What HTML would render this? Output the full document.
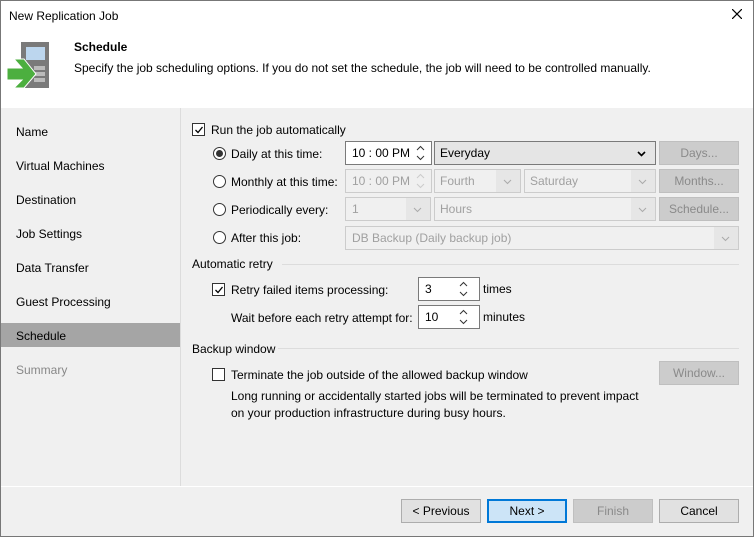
<!DOCTYPE html><html><head><style>
*{box-sizing:border-box;margin:0;padding:0}
body{width:754px;height:537px;overflow:hidden;font-family:"Liberation Sans",sans-serif;font-size:12px;color:#000;background:#f0f0f0;position:relative}
.a{position:absolute;white-space:nowrap}
.win{position:absolute;left:0;top:0;width:754px;height:537px;border:1px solid #777}
.box{position:absolute;border:1px solid #adadad;background:#fff;padding-left:6px;line-height:22px}
.dis{background:#f0f0f0;border-color:#ccc;color:#a0a0a0}
.btn{position:absolute;border:1px solid #adadad;background:#e1e1e1;text-align:center;line-height:22px}
.bd{background:#ccc;border-color:#bfbfbf;color:#8a8a8a}
.cb{position:absolute;width:13px;height:13px;border:1px solid #333;background:#fff}
.rb{position:absolute;width:13px;height:13px;border:1px solid #333;border-radius:50%;background:#fff}
.nav{position:absolute;left:16px}
svg.c{position:absolute}
</style></head><body>
<div class="a" style="left:0;top:0;width:754px;height:108px;background:#fff"></div>
<div class="a" style="left:9px;top:9px;font-size:12px">New Replication Job</div>
<svg class="a" style="left:732px;top:9px" width="10" height="10"><path d="M0 0L10 10M10 0L0 10" stroke="#000" stroke-width="1.2"/></svg>
<svg class="a" style="left:6px;top:42px" width="46" height="48">
<rect x="15" y="0" width="28" height="46" fill="#7a7a7a"/>
<rect x="20" y="5" width="19" height="13" fill="#bcd6ee"/>
<rect x="28" y="24" width="11" height="4" fill="#bbb"/><rect x="28" y="30" width="11" height="4" fill="#bbb"/><rect x="28" y="36" width="11" height="4" fill="#bbb"/>
<path d="M1 26 L16 26 L8 17 L18 17 L30 32 L18 46 L8 46 L16 38 L1 38 Z" fill="#4caf3f" stroke="#fff" stroke-width="1"/>
</svg>
<div class="a" style="left:74px;top:40px;font-weight:bold">Schedule</div>
<div class="a" style="left:74px;top:61px">Specify the job scheduling options. If you do not set the schedule, the job will need to be controlled manually.</div>
<div class="a" style="left:180px;top:108px;width:1px;height:378px;background:#dcdcdc"></div>
<div class="a" style="left:0;top:486px;width:754px;height:1px;background:#fff"></div>
<div class="a" style="left:1px;top:323px;width:179px;height:24px;background:#a5a5a5"></div>
<div class="nav a" style="top:125px">Name</div>
<div class="nav a" style="top:159px">Virtual Machines</div>
<div class="nav a" style="top:193px">Destination</div>
<div class="nav a" style="top:227px">Job Settings</div>
<div class="nav a" style="top:261px">Data Transfer</div>
<div class="nav a" style="top:295px">Guest Processing</div>
<div class="nav a" style="top:329px">Schedule</div>
<div class="nav a" style="top:363px;color:#888">Summary</div>

<div class="cb" style="left:192px;top:123px"><svg class="c" style="left:1px;top:1px" width="10" height="10"><path d="M1.5 5L4 7.5L8.5 2" stroke="#000" stroke-width="1.3" fill="none"/></svg></div>
<div class="a" style="left:211px;top:123px">Run the job automatically</div>

<div class="rb" style="left:213px;top:147px"><div class="a" style="left:2px;top:2px;width:7px;height:7px;border-radius:50%;background:#333"></div></div>
<div class="a" style="left:231px;top:147px">Daily at this time:</div>
<div class="rb" style="left:213px;top:175px"></div>
<div class="a" style="left:231px;top:175px">Monthly at this time:</div>
<div class="rb" style="left:213px;top:203px"></div>
<div class="a" style="left:231px;top:203px">Periodically every:</div>
<div class="rb" style="left:213px;top:231px"></div>
<div class="a" style="left:231px;top:231px">After this job:</div>

<div class="box" style="left:345px;top:141px;width:87px;height:24px;border-color:#7a7a7a">10 : 00 PM<svg class="c" style="left:70px;top:3px" width="9" height="16"><path d="M1 5L4.5 1.5L8 5M1 11L4.5 14.5L8 11" stroke="#333" fill="none"/></svg></div>
<div class="box" style="left:434px;top:141px;width:222px;height:24px;background:#e5e5e5;border-color:#7a7a7a;padding-left:5px">Everyday<svg class="c" style="left:202px;top:9px" width="9" height="6"><path d="M1 1L4.5 4.5L8 1" stroke="#000" stroke-width="1.6" fill="none"/></svg></div>
<div class="btn bd" style="left:659px;top:141px;width:80px;height:24px">Days...</div>

<div class="box dis" style="left:345px;top:169px;width:87px;height:24px">10 : 00 PM<svg class="c" style="left:70px;top:3px" width="9" height="16"><path d="M1 5L4.5 1.5L8 5M1 11L4.5 14.5L8 11" stroke="#ccc" fill="none"/></svg></div>
<div class="box dis" style="left:434px;top:169px;width:87px;height:24px;padding-left:5px">Fourth<div class="a" style="left:61px;top:0;width:24px;height:22px;background:#e6e6e6"></div><svg class="c" style="left:68px;top:9px" width="9" height="6"><path d="M1 1L4.5 4.5L8 1" stroke="#aaa" fill="none"/></svg></div>
<div class="box dis" style="left:524px;top:169px;width:132px;height:24px;padding-left:5px">Saturday<div class="a" style="left:106px;top:0;width:24px;height:22px;background:#e6e6e6"></div><svg class="c" style="left:113px;top:9px" width="9" height="6"><path d="M1 1L4.5 4.5L8 1" stroke="#aaa" fill="none"/></svg></div>
<div class="btn bd" style="left:659px;top:169px;width:80px;height:24px">Months...</div>

<div class="box dis" style="left:345px;top:197px;width:86px;height:24px">1<div class="a" style="left:60px;top:0;width:24px;height:22px;background:#e6e6e6"></div><svg class="c" style="left:67px;top:9px" width="9" height="6"><path d="M1 1L4.5 4.5L8 1" stroke="#aaa" fill="none"/></svg></div>
<div class="box dis" style="left:434px;top:197px;width:222px;height:24px;padding-left:5px">Hours<div class="a" style="left:196px;top:0;width:24px;height:22px;background:#e6e6e6"></div><svg class="c" style="left:203px;top:9px" width="9" height="6"><path d="M1 1L4.5 4.5L8 1" stroke="#aaa" fill="none"/></svg></div>
<div class="btn bd" style="left:659px;top:197px;width:80px;height:24px">Schedule...</div>

<div class="box dis" style="left:345px;top:226px;width:394px;height:24px">DB Backup (Daily backup job)<div class="a" style="left:368px;top:0;width:24px;height:22px;background:#e6e6e6"></div><svg class="c" style="left:375px;top:9px" width="9" height="6"><path d="M1 1L4.5 4.5L8 1" stroke="#aaa" fill="none"/></svg></div>

<div class="a" style="left:192px;top:257px">Automatic retry</div>
<div class="a" style="left:282px;top:264px;width:457px;height:1px;background:#dcdcdc"></div>
<div class="cb" style="left:212px;top:283px"><svg class="c" style="left:1px;top:1px" width="10" height="10"><path d="M1.5 5L4 7.5L8.5 2" stroke="#000" stroke-width="1.3" fill="none"/></svg></div>
<div class="a" style="left:231px;top:283px">Retry failed items processing:</div>
<div class="box" style="left:418px;top:277px;width:62px;height:24px;border-color:#7a7a7a">3<svg class="c" style="left:40px;top:3px" width="9" height="16"><path d="M1 5L4.5 1.5L8 5M1 11L4.5 14.5L8 11" stroke="#333" fill="none"/></svg></div>
<div class="a" style="left:483px;top:282px">times</div>
<div class="a" style="left:231px;top:311px">Wait before each retry attempt for:</div>
<div class="box" style="left:418px;top:305px;width:62px;height:24px;border-color:#7a7a7a">10<svg class="c" style="left:40px;top:3px" width="9" height="16"><path d="M1 5L4.5 1.5L8 5M1 11L4.5 14.5L8 11" stroke="#333" fill="none"/></svg></div>
<div class="a" style="left:483px;top:310px">minutes</div>

<div class="a" style="left:192px;top:342px">Backup window</div>
<div class="a" style="left:278px;top:348px;width:461px;height:1px;background:#dcdcdc"></div>
<div class="cb" style="left:212px;top:368px"></div>
<div class="a" style="left:231px;top:368px">Terminate the job outside of the allowed backup window</div>
<div class="btn bd" style="left:659px;top:361px;width:80px;height:24px">Window...</div>
<div class="a" style="left:231px;top:389px">Long running or accidentally started jobs will be terminated to prevent impact</div>
<div class="a" style="left:231px;top:406px">on your production infrastructure during busy hours.</div>

<div class="btn" style="left:401px;top:499px;width:80px;height:24px">&lt; Previous</div>
<div class="btn" style="left:487px;top:499px;width:80px;height:24px;background:#cce4f7;border:2px solid #0078d7;line-height:20px">Next &gt;</div>
<div class="btn bd" style="left:573px;top:499px;width:80px;height:24px">Finish</div>
<div class="btn" style="left:659px;top:499px;width:80px;height:24px">Cancel</div>
<div class="win"></div>
</body></html>
